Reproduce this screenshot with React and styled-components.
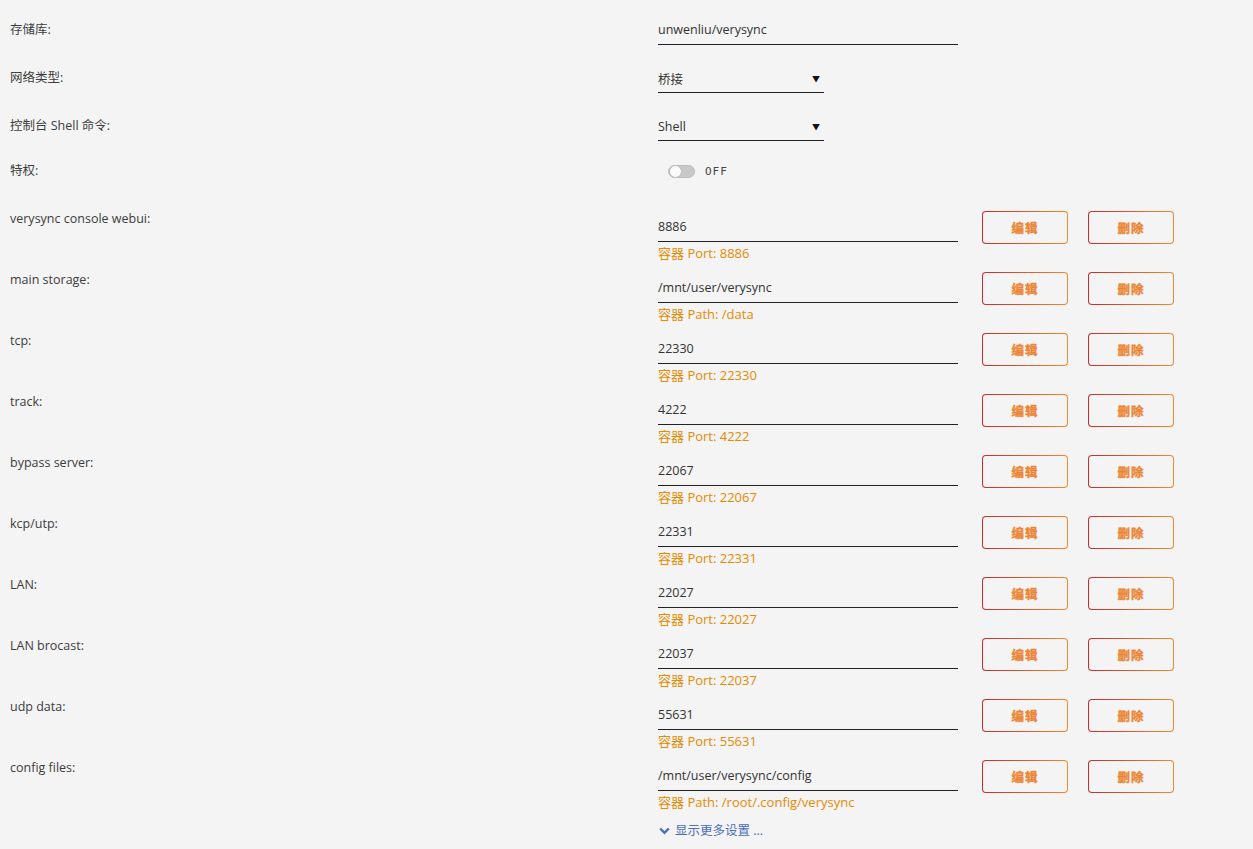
import React from "react";
import styled, { createGlobalStyle } from "styled-components";

const Global = createGlobalStyle`
  html, body { margin: 0; padding: 0; background: #f4f4f4; }
  body { font-family: "Open Sans", "Noto Sans CJK SC", sans-serif; font-size: 12.5px; color: #3a3a3a; }
`;

const Page = styled.div`
  padding: 15px 0 0 10px;
  width: 1243px;
  min-height: 834px;
  box-sizing: border-box;
`;

const Row = styled.div`
  display: grid;
  grid-template-columns: 648px 300px 24px 86px 20px 86px;
  align-items: ${p => (p.$top ? "start" : "center")};
  margin-bottom: ${p => p.$mb || 0}px;
`;

const Label = styled.div`
  line-height: 16px;
  color: #3c3c3c;
`;

const Field = styled.div`
  width: ${p => p.$w || 300}px;
  height: 30px;
  box-sizing: border-box;
  border-bottom: 1px solid #222;
  display: flex;
  align-items: center;
  justify-content: space-between;
  padding: ${p => (p.$select ? "1px 4px 0 0" : "0 2px 0 0")};
  color: #333;
  margin-top: ${p => p.$mt || 0}px;
`;

const Arrow = styled.span`
  font-size: 8px;
  color: #111;
`;

const Helper = styled.div`
  color: #e68a00;
  font-size: 13px;
  line-height: 16px;
  margin-top: 3px;
`;

const ToggleWrap = styled.div`
  display: flex;
  align-items: center;
  gap: 10px;
  padding-left: 10px;
  height: 24px;
`;

const Track = styled.div`
  width: 27px;
  height: 13px;
  border-radius: 7px;
  background: #c8c8c8;
  border: 1px solid #bdbdbd;
  box-sizing: border-box;
  position: relative;
`;

const Knob = styled.div`
  position: absolute;
  left: 0;
  top: -1px;
  width: 13px;
  height: 13px;
  border-radius: 50%;
  background: #fafafa;
  border: 1px solid #bdbdbd;
  box-sizing: border-box;
`;

const OffText = styled.span`
  font-family: "DejaVu Sans Mono", monospace;
  font-size: 11px;
  letter-spacing: 1px;
  color: #444;
`;

const Btn = styled.button`
  width: 86px;
  height: 33px;
  border: 1px solid transparent;
  border-radius: 4px;
  background: linear-gradient(#f4f4f4, #f4f4f4) padding-box,
    linear-gradient(90deg, #cc2a2c, #ee8a30) border-box;
  cursor: pointer;
  padding: 0;
  font-family: inherit;
`;

const BtnText = styled.span`
  font-family: "Noto Sans CJK SC", sans-serif;
  font-size: 12.5px;
  font-weight: 700;
  color: #ec8533;
  -webkit-text-stroke: 0.35px #ec8533;
  letter-spacing: 1px;
`;

const MoreLink = styled.a`
  display: flex;
  align-items: center;
  gap: 5px;
  color: #486dba;
  text-decoration: none;
  margin: 2px 0 0 1px;
  line-height: 16px;
  cursor: pointer;
`;

const Spacer = styled.div``;

const ports = [
  ["verysync console webui:", "8886", "容器 Port: 8886"],
  ["main storage:", "/mnt/user/verysync", "容器 Path: /data"],
  ["tcp:", "22330", "容器 Port: 22330"],
  ["track:", "4222", "容器 Port: 4222"],
  ["bypass server:", "22067", "容器 Port: 22067"],
  ["kcp/utp:", "22331", "容器 Port: 22331"],
  ["LAN:", "22027", "容器 Port: 22027"],
  ["LAN brocast:", "22037", "容器 Port: 22037"],
  ["udp data:", "55631", "容器 Port: 55631"],
  ["config files:", "/mnt/user/verysync/config", "容器 Path: /root/.config/verysync"],
];

export default function App() {
  return (
    <Page>
      <Global />
      <Row $mb={18}>
        <Label>存储库:</Label>
        <Field>unwenliu/verysync</Field>
      </Row>
      <Row $mb={18}>
        <Label>网络类型:</Label>
        <Field $w={166} $select>
          桥接<Arrow>▼</Arrow>
        </Field>
      </Row>
      <Row $mb={18}>
        <Label>控制台 Shell 命令:</Label>
        <Field $w={166} $select>
          Shell<Arrow>▼</Arrow>
        </Field>
      </Row>
      <Row $mb={28}>
        <Label>特权:</Label>
        <ToggleWrap>
          <Track>
            <Knob />
          </Track>
          <OffText>OFF</OffText>
        </ToggleWrap>
      </Row>
      {ports.map(([label, value, helper]) => (
        <Row $top key={label} $mb={11}>
          <Label>{label}</Label>
          <div>
            <Field $mt={1}>{value}</Field>
            <Helper>{helper}</Helper>
          </div>
          <Spacer />
          <Btn>
            <BtnText>编辑</BtnText>
          </Btn>
          <Spacer />
          <Btn>
            <BtnText>删除</BtnText>
          </Btn>
        </Row>
      ))}
      <Row $mb={0}>
        <Spacer />
        <MoreLink>
          <svg width="11" height="8" viewBox="0 0 11 8">
            <path d="M1.2 1.5 L5.5 5.8 L9.8 1.5" fill="none" stroke="#486dba" strokeWidth="2.4" />
          </svg>
          显示更多设置 ...
        </MoreLink>
      </Row>
    </Page>
  );
}
